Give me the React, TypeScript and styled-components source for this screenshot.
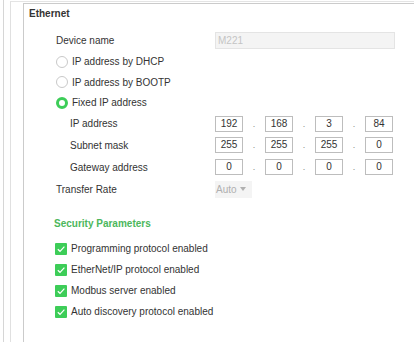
import React from "react";
import styled, { createGlobalStyle } from "styled-components";

const GlobalStyle = createGlobalStyle`
  html, body {
    margin: 0;
    padding: 0;
    background: #ffffff;
    overflow: hidden;
  }
  body {
    font-family: "Liberation Sans", Arial, sans-serif;
    font-size: 10px;
    color: #333333;
  }
`;

const Page = styled.div`
  display: flex;
  height: 342px;
  padding-left: 3px;
  box-sizing: border-box;
`;

const OuterRail = styled.div`
  flex: 1;
  display: flex;
  border-left: 1px solid #d6d6d6;
  padding-left: 6px;
`;

const InnerRail = styled.div`
  flex: 1;
  display: flex;
  margin-top: 1px;
  border-left: 1px solid #e0e0e0;
  border-top: 1px solid #e4e4e4;
  padding-left: 12px;
  padding-top: 1px;
`;

const Panel = styled.section`
  flex: 1;
  border: 1px solid #cbcbcb;
  border-right: none;
  border-bottom: none;
  display: flex;
  flex-direction: column;
  padding: 4px 0 0 0;
`;

const Title = styled.div`
  font-weight: bold;
  line-height: 12px;
  padding-left: 5px;
  color: #333;
  margin-bottom: 9px;
`;

const Row = styled.div<{ $h: number; $indent: number; $mt?: number }>`
  display: flex;
  align-items: center;
  height: ${(p) => p.$h}px;
  margin-top: ${(p) => p.$mt ?? 0}px;
  padding-left: ${(p) => p.$indent}px;
`;

const Label = styled.span<{ $w: number }>`
  width: ${(p) => p.$w}px;
  flex: none;
  color: #333;
  white-space: nowrap;
`;

const DisabledInput = styled.div`
  width: 180px;
  height: 17px;
  box-sizing: border-box;
  background: #f4f4f4;
  border: 1px solid #e4e4e4;
  color: #c4c4c4;
  line-height: 15px;
  padding-left: 2px;
`;

const RadioCircle = styled.span<{ $checked?: boolean }>`
  width: 12px;
  height: 12px;
  border-radius: 50%;
  box-sizing: border-box;
  background: #fff;
  border: ${(p) => (p.$checked ? "3px solid #3dcd58" : "1px solid #c9c9c9")};
  margin-right: 4px;
  flex: none;
`;

const OptionText = styled.span`
  color: #333;
  white-space: nowrap;
`;

const IpGroup = styled.div`
  display: flex;
  align-items: center;
`;

const Octet = styled.div`
  width: 28px;
  height: 16px;
  box-sizing: border-box;
  border: 1px solid #bdbdbd;
  text-align: center;
  line-height: 14px;
  color: #333;
  background: #fff;
`;

const Dot = styled.span`
  width: 22px;
  text-align: center;
  color: #888;
  line-height: 14px;
  font-size: 9px;
`;

const Dropdown = styled.div`
  width: 37px;
  height: 17px;
  background: #f4f4f4;
  color: #b0b0b0;
  display: flex;
  align-items: center;
  padding-left: 1px;
  box-sizing: border-box;
  gap: 3px;
`;

const Caret = styled.span`
  width: 0;
  height: 0;
  border-left: 3px solid transparent;
  border-right: 3px solid transparent;
  border-top: 4px solid #b0b0b0;
`;

const SectionTitle = styled.div`
  font-weight: bold;
  color: #4cb75c;
`;

const CheckBox = styled.span`
  width: 12px;
  height: 12px;
  border-radius: 1px;
  background: #3dcd58;
  display: flex;
  align-items: center;
  justify-content: center;
  margin-right: 4px;
  flex: none;
`;

const LABEL_COL = 191;

const Check = () => (
  <CheckBox>
    <svg width="10" height="10" viewBox="0 0 10 10">
      <polyline points="1.8,5.2 4,7.3 8.4,2.6" fill="none" stroke="#ffffff" strokeWidth="1.2" />
    </svg>
  </CheckBox>
);

const IpRow = ({ label, values, h }: { label: string; values: string[]; h: number }) => (
  <Row $h={h} $indent={46}>
    <Label $w={LABEL_COL - 46}>{label}</Label>
    <IpGroup>
      {values.map((v, i) => (
        <React.Fragment key={i}>
          {i > 0 && <Dot>.</Dot>}
          <Octet>{v}</Octet>
        </React.Fragment>
      ))}
    </IpGroup>
  </Row>
);

export default function App() {
  return (
    <>
      <GlobalStyle />
      <Page>
        <OuterRail>
          <InnerRail>
            <Panel>
              <Title>Ethernet</Title>
              <Row $h={22} $indent={32}>
                <Label $w={LABEL_COL - 32}>Device name</Label>
                <DisabledInput>M221</DisabledInput>
              </Row>
              <Row $h={21} $indent={32}>
                <RadioCircle />
                <OptionText>IP address by DHCP</OptionText>
              </Row>
              <Row $h={20} $indent={32}>
                <RadioCircle />
                <OptionText>IP address by BOOTP</OptionText>
              </Row>
              <Row $h={21} $indent={32}>
                <RadioCircle $checked />
                <OptionText>Fixed IP address</OptionText>
              </Row>
              <IpRow label="IP address" values={["192", "168", "3", "84"]} h={21} />
              <IpRow label="Subnet mask" values={["255", "255", "255", "0"]} h={22} />
              <IpRow label="Gateway address" values={["0", "0", "0", "0"]} h={22} />
              <Row $h={22} $indent={32}>
                <Label $w={LABEL_COL - 32}>Transfer Rate</Label>
                <Dropdown>
                  Auto <Caret />
                </Dropdown>
              </Row>
              <Row $h={22} $indent={30} $mt={12}>
                <SectionTitle>Security Parameters</SectionTitle>
              </Row>
              <Row $h={21} $indent={31} $mt={4}>
                <Check />
                <OptionText>Programming protocol enabled</OptionText>
              </Row>
              <Row $h={21} $indent={31}>
                <Check />
                <OptionText>EtherNet/IP protocol enabled</OptionText>
              </Row>
              <Row $h={21} $indent={31}>
                <Check />
                <OptionText>Modbus server enabled</OptionText>
              </Row>
              <Row $h={21} $indent={31}>
                <Check />
                <OptionText>Auto discovery protocol enabled</OptionText>
              </Row>
            </Panel>
          </InnerRail>
        </OuterRail>
      </Page>
    </>
  );
}
